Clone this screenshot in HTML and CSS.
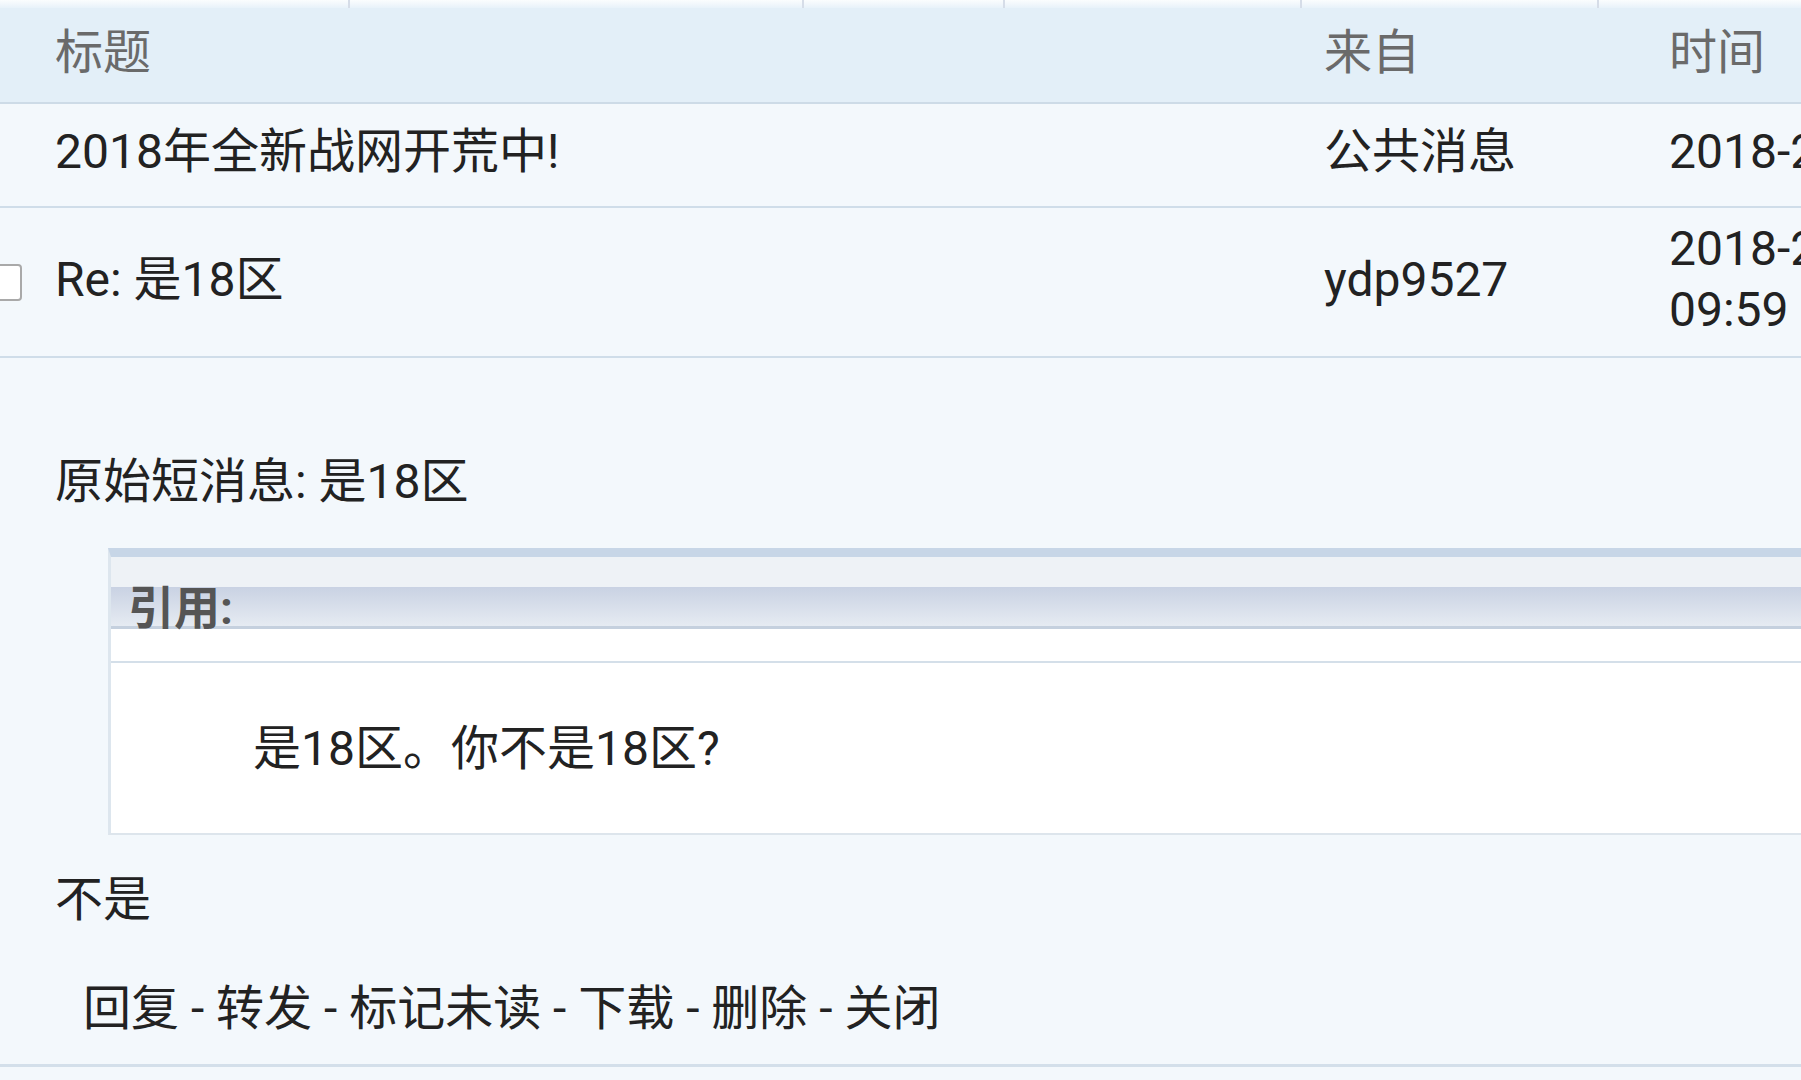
FILE: index.html
```html
<!DOCTYPE html>
<html>
<head>
    <meta charset="UTF-8">
    <title>短消息</title>
    <link rel="stylesheet" href="styles.css">
</head>
<body>
    <div class="top-strip">
        <span style="width: 348px"></span>
        <span style="width: 452px"></span>
        <span style="width: 199px"></span>
        <span style="width: 295px"></span>
        <span style="width: 295px"></span>
        <span></span>
    </div>
    <table class="pm-list">
        <colgroup>
            <col class="col-check">
            <col class="col-title">
            <col class="col-from">
            <col class="col-time">
        </colgroup>
        <thead>
            <tr>
                <th></th>
                <th>标题</th>
                <th>来自</th>
                <th>时间</th>
            </tr>
        </thead>
        <tbody>
            <tr class="row-single">
                <td></td>
                <td>2018年全新战网开荒中!</td>
                <td>公共消息</td>
                <td>2018-2-14</td>
            </tr>
            <tr class="row-double">
                <td><span class="checkbox"></span></td>
                <td>Re: 是18区</td>
                <td>ydp9527</td>
                <td>2018-2-24<br>09:59</td>
            </tr>
        </tbody>
    </table>

    <div class="pm-view">
        <div class="pm-subject">原始短消息: 是18区</div>
        <div class="quote">
            <div class="quote-title">引用:</div>
            <div class="quote-gap"></div>
            <div class="quote-body">是18区。你不是18区?</div>
        </div>
        <div class="pm-text">不是</div>
        <div class="pm-actions">回复 - 转发 - 标记未读 - 下载 - 删除 - 关闭</div>
    </div>
</body>
</html>
```

FILE: styles.css
```css
body {
    margin: 0;
    padding: 0;
    background-color: #f3f8fc;
    color: #222;
    font-family: Roboto, "Noto Sans CJK SC", sans-serif;
    font-size: 48px;
    line-height: 61px;
    overflow: hidden;
    height: 1080px;
}

/* bottom edge of the toolbar above the list */
.top-strip {
    display: flex;
    height: 8px;
    background: linear-gradient(to bottom, #fbfdfe, #e8f2fa);
}
.top-strip span {
    border-right: 2px solid #d6dde8;
}
.top-strip span:last-child {
    flex: 1;
    border-right: none;
}

.pm-list {
    border-collapse: collapse;
    table-layout: fixed;
    width: 1954px;
}
.col-check { width: 40px; }
.col-title { width: 1269px; }
.col-from { width: 345px; }
.col-time { width: 300px; }

.pm-list th {
    background-color: #e3eff8;
    color: #6a6a6a;
    font-weight: normal;
    text-align: left;
    padding: 14px 15px 19px;
    border-bottom: 2px solid #cddbe7;
}
.pm-list td {
    text-align: left;
    vertical-align: middle;
    padding: 17px 15px 24px;
    border-bottom: 2px solid #cfdde9;
    white-space: nowrap;
}
.row-double td {
    padding: 10px 15px 16px;
}

.checkbox {
    display: inline-block;
    vertical-align: middle;
    width: 33px;
    height: 33px;
    margin-left: -30px;
    border: 2px solid #a9a9a9;
    border-radius: 4px;
    background-color: #fff;
}

.pm-view {
    padding: 93px 0 25px 55px;
    border-bottom: 3px solid #d3dfea;
}
.quote {
    width: 2000px;
    margin: 36px 0 0 53px;
    background-color: #fff;
    border-top: 9px solid #c7d6e7;
    border-left: 3px solid #dde6ee;
    border-bottom: 2px solid #dde5ec;
}
.quote-title {
    box-sizing: border-box;
    height: 72px;
    padding: 27px 0 0 17px;
    line-height: 48px;
    font-size: 46px;
    font-weight: bold;
    color: #555;
    background: linear-gradient(to bottom,
        #eef2f6 0, #eef2f6 30px,
        #c9d2e3 30px, #e6ebf2 69px,
        #c5d0de 69px, #c5d0de 72px);
}
.quote-gap {
    height: 32px;
    border-bottom: 2px solid #d4dfe9;
}
.quote-body {
    display: flex;
    align-items: center;
    height: 170px;
    padding-left: 142px;
}
.pm-text {
    margin-top: 34px;
}
.pm-actions {
    margin-top: 48px;
    padding-left: 28px;
}
```
